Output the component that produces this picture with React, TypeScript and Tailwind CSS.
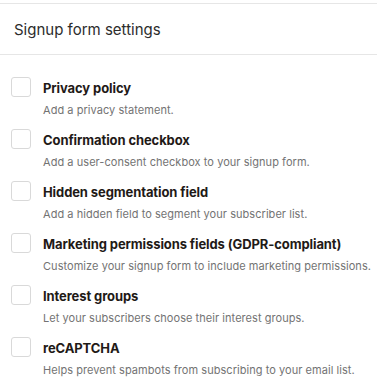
import React from "react";

const items = [
  { title: "Privacy policy", desc: "Add a privacy statement." },
  { title: "Confirmation checkbox", desc: "Add a user-consent checkbox to your signup form." },
  { title: "Hidden segmentation field", desc: "Add a hidden field to segment your subscriber list." },
  { title: "Marketing permissions fields (GDPR-compliant)", desc: "Customize your signup form to include marketing permissions." },
  { title: "Interest groups", desc: "Let your subscribers choose their interest groups." },
  { title: "reCAPTCHA", desc: "Helps prevent spambots from subscribing to your email list." },
];

export default function App() {
  return (
    <div className="w-[377px] h-[384px] bg-white overflow-hidden" style={{ fontFamily: "Inter, 'Noto Sans', sans-serif" }}>
      <div className="h-[3px]" />
      <div className="border-t border-b border-[#e6e6e6] h-[52px] flex items-center pl-[14px]">
        <span className="text-[15px] text-[#2c2c2c] leading-none">Signup form settings</span>
      </div>
      <div className="pt-[22px] pl-[11px] flex flex-col">
        {items.map((it) => (
          <div key={it.title} className="flex h-[52px]">
            <div className="w-[20px] h-[20px] border border-[#d9d9d9] rounded-[3px] bg-white shrink-0" />
            <div className="ml-[12px] flex flex-col">
              <div className="text-[13px] leading-[18px] font-bold text-[#1f1a17] mt-[2px] tracking-[-0.1px]">{it.title}</div>
              <div className="text-[11px] leading-[14px] text-[#737373] mt-[6px] tracking-[0.05px]">{it.desc}</div>
            </div>
          </div>
        ))}
      </div>
    </div>
  );
}
